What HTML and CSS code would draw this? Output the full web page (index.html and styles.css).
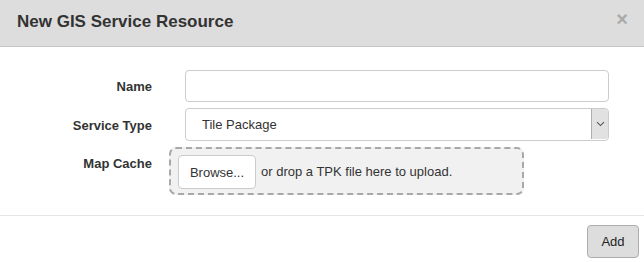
FILE: index.html
```html
<!DOCTYPE html>
<html>
<head>
<meta charset="utf-8">
<link rel="stylesheet" href="styles.css">
</head>
<body>
<div class="modal">
  <div class="modal-header">
    <h4 class="modal-title">New GIS Service Resource</h4>
    <span class="close">&times;</span>
  </div>
  <div class="modal-body">
    <div class="form-row">
      <label class="form-label">Name</label>
      <div class="form-control text-input"></div>
    </div>
    <div class="form-row">
      <label class="form-label">Service Type</label>
      <div class="form-control select">
        <span class="select-value">Tile Package</span>
        <span class="select-arrow">
          <svg width="9" height="6" viewBox="0 0 9 6"><path d="M1 1.2 L4.5 4.6 L8 1.2" fill="none" stroke="#555" stroke-width="1.1"/></svg>
        </span>
      </div>
    </div>
    <div class="form-row cache-row">
      <label class="form-label">Map Cache</label>
      <div class="dropzone">
        <span class="browse-btn">Browse...</span>
        <span class="drop-text">or drop a TPK file here to upload.</span>
      </div>
    </div>
  </div>
  <div class="modal-footer">
    <span class="add-btn">Add</span>
  </div>
</div>
</body>
</html>
```
FILE: styles.css
```css
html, body {
  margin: 0;
  padding: 0;
  background: #fff;
}
body {
  font-family: "Liberation Sans", Arial, sans-serif;
  font-size: 13px;
  color: #333;
  width: 644px;
  height: 262px;
  overflow: hidden;
}
.modal {
  display: flex;
  flex-direction: column;
}
.modal-header {
  height: 46px;
  background: #dddddd;
  border-bottom: 1px solid #c4c4c4;
  display: flex;
  align-items: center;
  justify-content: space-between;
  padding: 0 16px 0 17px;
  box-sizing: content-box;
}
.modal-title {
  margin: 0;
  font-size: 17px;
  font-weight: bold;
  color: #333;
  padding-bottom: 3px;
}
.close {
  font-size: 20px;
  font-weight: bold;
  color: #aaa;
  line-height: 1;
  padding-bottom: 8px;
}
.modal-body {
  padding: 23px 0 20px 0;
  display: flex;
  flex-direction: column;
  gap: 6px;
}
.form-row {
  display: grid;
  grid-template-columns: 152px auto;
  column-gap: 17px;
  align-items: center;
}
.cache-row {
  align-items: start;
}
.form-label {
  text-align: right;
  font-weight: bold;
  color: #333;
  padding-top: 1px;
}
.cache-row .form-label {
  padding-top: 9px;
}
.form-control {
  margin-left: 16px;
  width: 424px;
  box-sizing: border-box;
  border: 1px solid #ccc;
  border-radius: 4px;
  background: #fff;
}
.text-input {
  height: 32px;
}
.select {
  height: 33px;
  display: flex;
  align-items: stretch;
  justify-content: space-between;
}
.select-value {
  display: flex;
  align-items: center;
  padding-left: 16px;
  color: #333;
}
.select-arrow {
  width: 16px;
  margin: 0 0 1px 0;
  background: #e1e1e1;
  border-left: 1px solid #adadad;
  border-radius: 0 3px 3px 0;
  display: flex;
  align-items: center;
  justify-content: center;
}
.dropzone {
  width: 355px;
  height: 48px;
  box-sizing: border-box;
  border: 2px dashed #a8a8a8;
  border-radius: 7px;
  background: #f1f1f1;
  display: flex;
  align-items: center;
  padding-left: 7px;
  gap: 5px;
}
.browse-btn {
  width: 78px;
  height: 34px;
  box-sizing: border-box;
  background: #fff;
  border: 1px solid #ccc;
  border-radius: 4px;
  display: flex;
  align-items: center;
  justify-content: center;
  margin-top: 2px;
  color: #333;
}
.drop-text {
  color: #333;
}
.modal-footer {
  border-top: 1px solid #e5e5e5;
  display: flex;
  justify-content: flex-end;
  padding: 9px 5px 0 0;
}
.add-btn {
  width: 52px;
  height: 33px;
  box-sizing: border-box;
  background: #dddddd;
  border: 1px solid #adadad;
  border-radius: 4px;
  display: flex;
  align-items: center;
  justify-content: center;
  color: #222;
}
```
